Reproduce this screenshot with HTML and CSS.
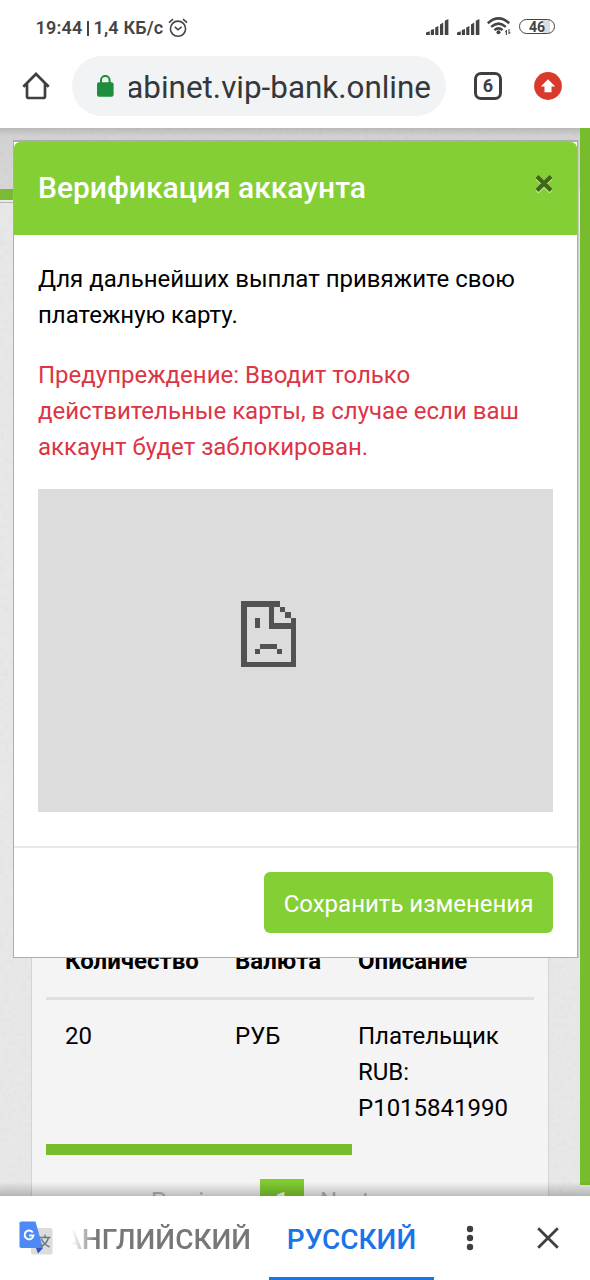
FILE: index.html
```html
<!DOCTYPE html>
<html lang="ru">
	<head>
		<meta charset="utf-8">
		<title>Верификация аккаунта</title>
		<link rel="stylesheet" href="styles.css">
	</head>
	<body>

		<div class="status">
			<span class="clock">19:44 <i></i> 1,4 КБ/с</span>
			<svg class="alarm" width="20" height="20" viewBox="0 0 20 20" fill="none" stroke="#444" stroke-width="1.6">
				<circle cx="10" cy="10.7" r="7.6"/>
				<path d="M1 4.6L5 1.2M19 4.6L15 1.2M6.8 8.8L10 11.8L13.6 8.8"/>
			</svg>
			<div class="statusRight">
				<svg class="signal" width="23" height="16" viewBox="0 0 23 16" fill="#444">
					<path d="M0 16v-2.5l3.8-1.3V16zM4.8 16v-5l3.2-1V16zM9.2 16V8.4l3.2-1.5V16zM14 16V5.5l3.2-2V16zM18.8 16V1.8L22.4 0V16z"/>
				</svg>
				<svg class="signal" width="23" height="16" viewBox="0 0 23 16" fill="#444">
					<path d="M0 16v-2.5l3.8-1.3V16zM4.8 16v-5l3.2-1V16zM9.2 16V8.4l3.2-1.5V16zM14 16V5.5l3.2-2V16zM18.8 16V1.8L22.4 0V16z"/>
				</svg>
				<svg class="wifi" width="24" height="19" viewBox="0 0 24 19" fill="none" stroke="#444" stroke-width="2.5">
					<path d="M.8 6.2Q11.5-3.4 22.2 6.2M4.2 9.9Q11.5 3.3 18.8 9.9M7.4 13.1Q11.5 9.7 15.6 13.1"/>
					<circle cx="11.5" cy="15.2" r="2" fill="#444" stroke="none"/>
					<path d="M19.4 13v5M18 14.7h1.4M22 12v5M22 15.7h1.4" stroke-width="1.1"/>
				</svg>
				<span class="battery">46</span>
			</div>
		</div>

		<div class="toolbar">
			<svg class="home" width="28" height="28" viewBox="0 0 28 28" fill="none" stroke="#3c4043" stroke-width="2.7">
				<path d="M1.3 14.8L14 2l12.7 12.8M5 12v12.2q0 1.8 1.8 1.8h14.4q1.8 0 1.8-1.8V12"/>
			</svg>
			<div class="address">
				<svg width="17" height="22" viewBox="0 0 17 22">
					<rect x="0" y="7.2" width="16.6" height="14.5" rx="2" fill="#1e8e3e"/>
					<path d="M4 8V5.2a4.3 4.3 0 0 1 8.6 0V8" fill="none" stroke="#1e8e3e" stroke-width="2"/>
				</svg>
				<div class="url"><span>cabinet.vip-bank.online</span></div>
			</div>
			<div class="tabs">6</div>
			<svg class="update" width="28" height="28" viewBox="0 0 28 28">
				<circle cx="14" cy="14" r="13.9" fill="#d93a2b"/>
				<path d="M14 7.2l7.2 7.4h-3.7v5.6h-7v-5.6H6.8z" fill="#fff"/>
			</svg>
		</div>

		<div class="page">
			<svg class="grain" width="590" height="1068">
				<filter id="noise">
					<feTurbulence type="fractalNoise" baseFrequency="0.22" numOctaves="3"/>
					<feColorMatrix type="saturate" values="0"/>
				</filter>
				<rect width="590" height="1068" filter="url(#noise)"/>
			</svg>

			<div class="pageHead"></div>
			<div class="pageLine"></div>
			<div class="card">
				<table>
					<thead>
						<tr><th>Количество</th><th>Валюта</th><th>Описание</th></tr>
					</thead>
					<tbody>
						<tr><td>20</td><td>РУБ</td><td>Плательщик RUB: P1015841990</td></tr>
					</tbody>
				</table>
				<div class="scroll"></div>
				<div class="pagination">
					<span>Previous</span>
					<b>1</b>
					<span>Next</span>
				</div>
			</div>

			<div class="pageScroll"></div>

			<div id="modal">
				<div class="modalHeader">
					<h4>Верификация аккаунта</h4>
					<svg class="close" width="20" height="20" viewBox="0 0 20 20" fill="none" stroke-width="4.2">
						<path d="M3 4l14 14M17 4L3 18" stroke="#c4e8a0"/>
						<path d="M3 2.5l14 14M17 2.5L3 16.5" stroke="#426719"/>
					</svg>
				</div>
				<div class="modalBody">
					<p>Для дальнейших выплат привяжите свою платежную карту.</p>
					<p class="danger">Предупреждение: Вводит только действительные карты, в случае если ваш аккаунт будет заблокирован.</p>
					<div class="frame">
						<svg width="55" height="66" viewBox="0 0 10 12" preserveAspectRatio="none" fill="#525252" shape-rendering="crispEdges">
							<path d="M0 0h7v1h1v1h1v1h1v9H0zM1 1v10h8V5H5V1zM6 1v3h3V3H8V2H7V1z" fill-rule="evenodd"/>
							<path d="M2.5 3h.9v1.9h-.9zM3.4 7.8h3.2v1H3.4zM2.5 8.8h.9v.9h-.9zM6.6 8.8h.9v.9h-.9z"/>
						</svg>
					</div>
				</div>
				<div class="modalFooter">
					<div class="btSave">Сохранить изменения</div>
				</div>
			</div>
		</div>

		<div class="translate">
			<svg class="gt" width="34" height="34" viewBox="0 0 34 34">
				<rect x="12" y="7" width="21.5" height="26.5" rx="2" fill="#dcdcdc"/>
				<path d="M17 27h7l-5 5.5z" fill="#3052c4"/>
				<path d="M2.3.5h14.2L24 27H2.3Q.5 27 .5 25.2V2.3Q.5.5 2.3.5z" fill="#4d8af5"/>
				<path d="M13.8 11.6A4.4 4.4 0 1 0 14.4 14.6h-4.2" fill="none" stroke="#fff" stroke-width="2"/>
				<path d="M20.5 16.5h11M26 13.8v2.7M29.5 16.5q-1.5 6-8 9.5M22.5 18q2.5 5.5 8 8" fill="none" stroke="#667b83" stroke-width="1.5"/>
			</svg>
			<div class="lang"><span>АНГЛИЙСКИЙ</span></div>
			<div class="lang active">РУССКИЙ</div>
			<svg class="dots" width="8" height="26" viewBox="0 0 8 26" fill="#3f3f3f">
				<circle cx="4" cy="4" r="3.2"/>
				<circle cx="4" cy="13" r="3.2"/>
				<circle cx="4" cy="22" r="3.2"/>
			</svg>
			<svg class="cross" width="22" height="22" viewBox="0 0 22 22" stroke="#3f3f3f" stroke-width="2.8">
				<path d="M1.2 1.2l19.6 19.6M20.8 1.2L1.2 20.8"/>
			</svg>
		</div>

	</body>
</html>
```
FILE: styles.css
```css
body{
	margin: 0;
	width: 590px;
	height: 1280px;
	display: flex;
	flex-direction: column;
	overflow: hidden;
	background-color: #fff;
	font-family: Roboto, sans-serif;
	font-size: 24px;
	line-height: 36px;
	color: #000;
}

svg{
	display: block;
	flex: none;
}

.status{
	height: 56px;
	flex: none;
	display: flex;
	align-items: center;
	box-sizing: border-box;
	padding: 0 35px 1px 35.5px;
	color: #444;
}

.clock{
	font-size: 18px;
	font-weight: 600;
	letter-spacing: 0.2px;
	white-space: nowrap;
}

.clock i{
	display: inline-block;
	width: 1.5px;
	height: 15px;
	background-color: #444;
	vertical-align: -2px;
}

.alarm{
	margin-left: 5px;
}

.statusRight{
	margin-left: auto;
	display: flex;
	align-items: center;
}

.signal{
	margin-right: 8px;
}

.wifi{
	margin: 0 8px 0 -1px;
}

.battery{
	width: 34px;
	height: 13px;
	border: 1.5px solid #444;
	border-radius: 8px;
	background: linear-gradient(90deg, #fff 0, #fff 23px, #ddd 23px, #ddd 30px, #fff 30px);
	font-size: 14px;
	font-weight: 700;
	line-height: 14px;
	text-align: center;
}

.statusRight{
	position: relative;
	top: -1px;
}

.toolbar{
	height: 72px;
	flex: none;
	display: flex;
	align-items: center;
	box-sizing: border-box;
	padding: 0 28px 12px 22px;
}

.address{
	width: 374px;
	height: 60px;
	margin-left: 22px;
	box-sizing: border-box;
	padding-left: 25px;
	border-radius: 30px;
	background-color: #f1f3f5;
	display: flex;
	align-items: center;
}

/* the start of a long url slides out to the left */
.url{
	width: 302px;
	height: 44px;
	margin-left: 15px;
	overflow: hidden;
	display: flex;
	justify-content: flex-end;
	font-size: 31.4px;
	line-height: 48px;
	white-space: nowrap;
	color: #35383b;
}

.tabs{
	width: 22px;
	height: 22px;
	margin-left: 28px;
	border: 3px solid #3c4043;
	border-radius: 7px;
	font-size: 18px;
	font-weight: 700;
	line-height: 22px;
	text-align: center;
	color: #3c4043;
}

.update{
	margin-left: 32px;
}

.page{
	flex: 1;
	min-height: 0;
	position: relative;
	overflow: hidden;
	background-color: #e9e9e9;
}

.page::after{
	content: "";
	position: absolute;
	left: 0;
	right: 0;
	bottom: 0;
	height: 14px;
	background: linear-gradient(rgba(0,0,0,0), rgba(0,0,0,0.22));
}

.grain{
	position: absolute;
	top: 0;
	left: 0;
	opacity: 0.1;
}

.pageHead{
	height: 61px;
	background: linear-gradient(#b9b9b9, #d2d2d2 8px, #d8d8d8);
}

.pageLine{
	width: 577px;
	height: 11px;
	background-color: #76bc2d;
	box-shadow: 0 2px 0 #ececec, 0 3px 0 #b5b5b5;
}

.card{
	position: relative;
	width: 488px;
	height: 600px;
	margin: 710px 0 0 31px;
	padding: 14px;
	border: 1px solid #d3d3d3;
	background-color: #f4f4f4;
}

table{
	width: 488px;
	table-layout: fixed;
	border-collapse: separate;
	border-spacing: 0;
}

th, td{
	padding: 18px 17px 18px 19px;
	text-align: left;
	vertical-align: top;
}

th{
	border-bottom: 3px solid #dee0e3;
	font-weight: 700;
}

th:nth-child(1){
	width: 134px;
}

th:nth-child(2){
	width: 87px;
}

.scroll{
	width: 306px;
	height: 11px;
	background-color: #76bc2d;
}

.pagination{
	display: flex;
	align-items: center;
	height: 44px;
	margin: 24px 0 0 105px;
	color: #b3b3b3;
}

.pagination span:first-child{
	width: 109px;
}

.pagination b{
	width: 44px;
	margin-right: 16px;
	line-height: 44px;
	font-weight: 500;
	text-align: center;
	color: #fff;
	background-color: #80cb32;
}

.pageScroll{
	position: absolute;
	top: 0;
	right: 0;
	width: 10px;
	height: 1057px;
	background-color: #76bc2d;
}

#modal{
	position: absolute;
	top: 12px;
	left: 13px;
	width: 563px;
	height: 815px;
	border: 1px solid #adadad;
	border-top-width: 2px;
	background-color: #fff;
	box-shadow: 1px 0 0 #c9c9c9;
}

.modalHeader{
	height: 93px;
	display: flex;
	box-sizing: border-box;
	padding: 24px 23.5px 0 24px;
	border-radius: 6px 6px 0 0;
	background-color: #84cf35;
}

.modalHeader h4{
	flex: 1;
	margin: 0;
	font-size: 30px;
	font-weight: 500;
	line-height: 44px;
	color: #fff;
}

.close{
	margin-top: 8px;
}

.modalBody{
	padding: 26px 24px 34px;
}

.modalBody p{
	margin: 0 0 24px;
}

.modalBody .danger{
	color: #dc3545;
}

.frame{
	height: 323px;
	display: flex;
	justify-content: center;
	box-sizing: border-box;
	padding: 112px 55px 0 0;
	background-color: #dcdcdc;
}

.modalFooter{
	display: flex;
	justify-content: flex-end;
	padding: 24px;
	border-top: 2px solid #e9e9e9;
}

.btSave{
	width: 289px;
	height: 61px;
	border-radius: 6px;
	line-height: 65px;
	text-align: center;
	color: #fff;
	background-color: #84cf35;
}

.translate{
	height: 84px;
	flex: none;
	display: flex;
	align-items: center;
	box-sizing: border-box;
	padding-left: 19px;
	background-color: #fff;
}

.lang{
	width: 179px;
	height: 84px;
	margin-left: 19px;
	overflow: hidden;
	display: flex;
	justify-content: flex-end;
	font-size: 28px;
	font-weight: 500;
	line-height: 88px;
	white-space: nowrap;
	color: #777;
	-webkit-mask-image: linear-gradient(90deg, transparent, #000 24px);
	mask-image: linear-gradient(90deg, transparent, #000 24px);
}

.active{
	width: 165px;
	margin-left: 18px;
	box-sizing: border-box;
	border-bottom: 3px solid #1a73e8;
	justify-content: center;
	color: #1a73e8;
	-webkit-mask-image: none;
	mask-image: none;
}

.dots{
	margin-left: 32px;
}

.cross{
	margin-left: 63px;
}
```
